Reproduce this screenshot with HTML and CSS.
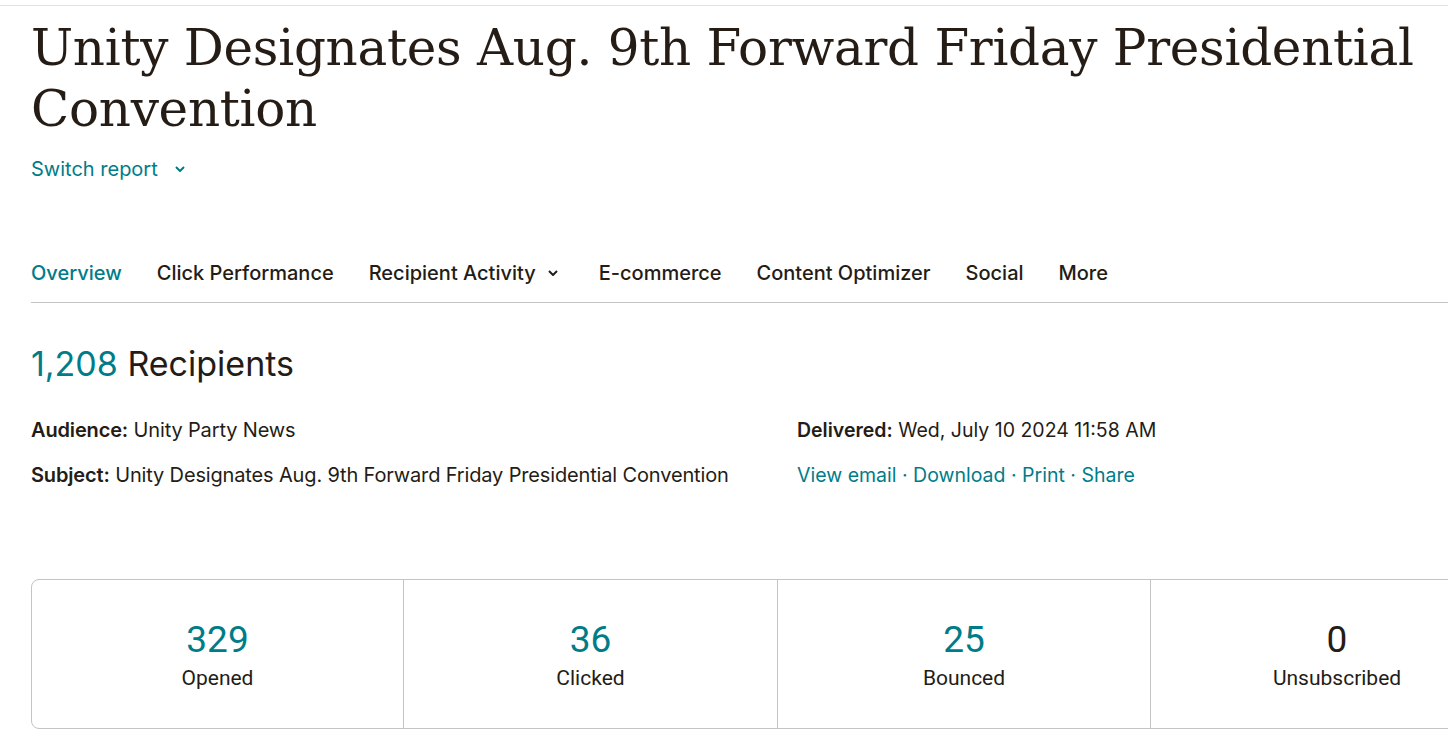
FILE: index.html
```html
<!DOCTYPE html>
<html>
<head>
<meta charset="utf-8">
<link rel="stylesheet" href="styles.css">
</head>
<body>
<div class="topbar"></div>
<main class="page">
  <h1 class="title">Unity Designates Aug. 9th Forward Friday Presidential Convention</h1>
  <a class="switch">Switch report <svg class="chev" viewBox="0 0 10 6" width="10" height="6"><path d="M1 1l4 4 4-4" fill="none" stroke="currentColor" stroke-width="2"/></svg></a>

  <nav class="tabs">
    <a class="tab active">Overview</a>
    <a class="tab">Click Performance</a>
    <a class="tab">Recipient Activity <svg class="chev dark" viewBox="0 0 10 6" width="10" height="6"><path d="M1 1l4 4 4-4" fill="none" stroke="currentColor" stroke-width="2"/></svg></a>
    <a class="tab">E-commerce</a>
    <a class="tab">Content Optimizer</a>
    <a class="tab">Social</a>
    <a class="tab">More</a>
  </nav>

  <h2 class="recipients"><span class="teal">1,208</span> Recipients</h2>

  <div class="meta">
    <div class="meta-col left">
      <p><b>Audience:</b> Unity Party News</p>
      <p><b>Subject:</b> Unity Designates Aug. 9th Forward Friday Presidential Convention</p>
    </div>
    <div class="meta-col right">
      <p><b>Delivered:</b> Wed, July 10 2024 11:58 AM</p>
      <p class="links"><a>View email</a> · <a>Download</a> · <a>Print</a> · <a>Share</a></p>
    </div>
  </div>

  <div class="stats">
    <div class="stat"><span class="num">329</span><span class="label">Opened</span></div>
    <div class="stat"><span class="num">36</span><span class="label">Clicked</span></div>
    <div class="stat"><span class="num">25</span><span class="label">Bounced</span></div>
    <div class="stat"><span class="num dark">0</span><span class="label">Unsubscribed</span></div>
  </div>
</main>
</body>
</html>
```

FILE: styles.css
```css
html, body {
  margin: 0;
  padding: 0;
  background: #fff;
  overflow: hidden;
}
body {
  width: 1448px;
  height: 749px;
  color: #241c15;
  font-family: "Inter", "Liberation Sans", sans-serif;
}
.topbar {
  height: 5px;
  border-bottom: 1px solid #e2e2e2;
}
.page {
  padding-left: 31px;
}
.title {
  margin: 12px 0 0 0;
  width: 1405px;
  font-family: "DejaVu Serif", serif;
  font-weight: 400;
  font-size: 50px;
  line-height: 61px;
  letter-spacing: -0.3px;
  color: #241c15;
}
.switch {
  display: inline-flex;
  align-items: center;
  gap: 17px;
  margin-top: 17px;
  font-size: 20px;
  color: #007c89;
}
.chev { display: block; }
.chev.dark { color: #241c15; margin-left: 12px; margin-right: 6px; }
.tabs {
  display: flex;
  align-items: center;
  gap: 35px;
  margin-top: 71px;
  height: 50px;
  border-bottom: 1px solid #c4c4c4;
}
.tab {
  display: inline-flex;
  align-items: center;
  font-size: 20px;
  font-weight: 500;
  color: #241c15;
  padding-bottom: 8px;
}
.tab.active { color: #007c89; }
.recipients {
  margin: 41px 0 0 0;
  font-size: 34px;
  font-weight: 400;
  line-height: 40px;
}
.teal { color: #007c89; }
.meta {
  display: flex;
  margin-top: 34px;
}
.meta-col p {
  margin: 0 0 20px 0;
  font-size: 19.5px;
  line-height: 25px;
}
.meta-col b { font-weight: 600; }
.meta-col.left { width: 766px; }
.meta-col.left p { font-size: 20px; letter-spacing: -0.15px; }
.links { color: #007c89; }
.stats {
  display: grid;
  grid-template-columns: 371px 374px 373px 373px;
  margin-top: 71px;
  width: 1492px;
  height: 148px;
  border: 1px solid #c4c4c4;
  border-radius: 8px;
}
.stat {
  display: flex;
  flex-direction: column;
  align-items: center;
  justify-content: center;
  border-left: 1px solid #c4c4c4;
  padding-top: 2px;
}
.stat:first-child { border-left: none; }
.num {
  font-family: "Roboto", sans-serif;
  font-size: 37px;
  line-height: 42px;
  color: #007c89;
}
.num.dark { color: #241c15; }
.label {
  font-family: "Roboto", sans-serif;
  font-size: 21px;
  line-height: 26px;
  margin-top: 4px;
}
```
